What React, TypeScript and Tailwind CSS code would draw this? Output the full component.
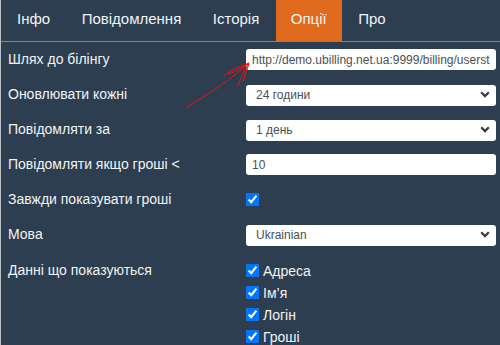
import React from "react";

const tabs = ["Інфо", "Повідомлення", "Історія", "Опції", "Про"];

function Chevron() {
  return (
    <svg
      className="pointer-events-none absolute right-[6px] top-[7px]"
      width="10"
      height="7"
      viewBox="0 0 10 7"
    >
      <path d="M1.2 1.3 5 5.1 8.8 1.3" fill="none" stroke="#343a40" strokeWidth="2.2" />
    </svg>
  );
}

function Select({ value }: { value: string }) {
  return (
    <div className="relative h-[21px] w-[250px]">
      <select
        defaultValue={value}
        className="h-full w-full appearance-none rounded-[3px] bg-white pl-[10px] text-[12px] text-[#495057] outline-none"
      >
        <option>{value}</option>
      </select>
      <Chevron />
    </div>
  );
}

function TextInput({ value }: { value: string }) {
  return (
    <input
      readOnly
      defaultValue={value}
      className="h-[21px] w-[250px] rounded-[3px] bg-white px-[6px] text-[12px] text-[#495057] outline-none"
    />
  );
}

function Check() {
  return <input type="checkbox" defaultChecked className="m-0 h-[13px] w-[13px] accent-[#0075ff]" />;
}

export default function App() {
  const shown = ["Адреса", "Ім’я", "Логін", "Гроші"];

  return (
    <div className="relative h-[345px] w-[500px] overflow-hidden border-l border-[#b9bfc6] bg-[#2c3e50] font-['Liberation_Sans',Arial,sans-serif] text-[#f2f4f5]">
      <div className="flex h-[42px] gap-[1.5px] border-b border-[#e06a1e] pl-px">
        {tabs.map((t) => (
          <div
            key={t}
            className={`flex h-full items-center px-[15px] pb-[2px] text-[15px] ${t === "Опції" ? "bg-[#e06a1e]" : ""}`}
          >
            {t}
          </div>
        ))}
      </div>

      <div className="grid grid-cols-[238px_250px] gap-y-[14px] pl-[7px] pt-[7px] text-[14px]">
        <div className="flex h-[21px] items-center">Шлях до білінгу</div>
        <TextInput value="http://demo.ubilling.net.ua:9999/billing/userstats/" />

        <div className="flex h-[21px] items-center">Оновлювати кожні</div>
        <Select value="24 години" />

        <div className="flex h-[21px] items-center">Повідомляти за</div>
        <Select value="1 день" />

        <div className="flex h-[21px] items-center">Повідомляти якщо гроші &lt;</div>
        <TextInput value="10" />

        <div className="flex h-[21px] items-center">Завжди показувати гроші</div>
        <div className="flex h-[21px] items-center">
          <Check />
        </div>

        <div className="flex h-[21px] items-center">Мова</div>
        <Select value="Ukrainian" />

        <div className="leading-[22px]">Данні що показуються</div>
        <div className="flex flex-col">
          {shown.map((s) => (
            <label key={s} className="flex h-[22px] items-center gap-[4px]">
              <Check />
              <span className="pt-[2px]">{s}</span>
            </label>
          ))}
        </div>
      </div>

      <svg className="pointer-events-none absolute left-0 top-0" width="500" height="345">
        <g fill="none" stroke="#ee1111" strokeWidth="1">
          <polyline points="186,107 196,101 207,94 216,88 226,81 236,73 242,68 248,63" />
          <polyline points="248,63 238,67 230,71 222,76" />
          <polyline points="248,63 240,68 233,72 227,74" />
          <polyline points="248,63 244,70 240,78 237,86" />
          <polyline points="248,64 245,72 242,82" />
        </g>
      </svg>
    </div>
  );
}
